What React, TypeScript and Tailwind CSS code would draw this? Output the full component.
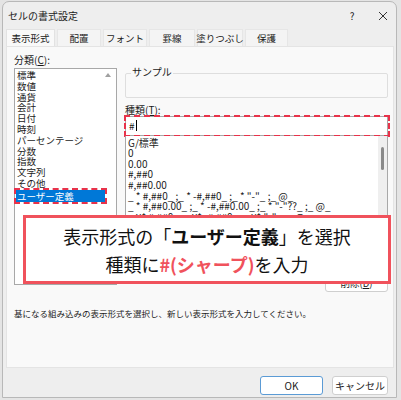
import React from "react";

const F = { fontFamily: '"Noto Sans CJK JP", "Noto Sans", sans-serif' };

export default function App() {
  const cats = ["標準", "数値", "通貨", "会計", "日付", "時刻", "パーセンテージ", "分数", "指数", "文字列", "その他"];
  const types = [
    "G/標準",
    "0",
    "0.00",
    "#,##0",
    "#,##0.00",
    '_ * #,##0_ ;_ * -#,##0_ ;_ * "-"_ ;_ @_',
    '_ * #,##0.00_ ;_ * -#,##0.00_ ;_ * "-"??_ ;_ @_',
    '_ ¥* #,##0_ ;_ ¥* -#,##0_ ;_ ¥* "-"_ ;_ @_',
    '_ ¥* #,##0.00_ ;_ ¥* -#,##0.00_ ;_ ¥* "-"??_ ;_ @_',
    "#,##0;-#,##0",
    "#,##0;[赤]-#,##0",
    "#,##0.00;-#,##0.00",
  ];
  const tabs: [string, number][] = [
    ["表示形式", 49],
    ["配置", 44],
    ["フォント", 44],
    ["罫線", 46],
    ["塗りつぶし", 46],
    ["保護", 43],
  ];
  return (
    <div className="relative w-[401px] h-[400px] overflow-hidden bg-[#e4e4e4] pl-[2px] pt-[1px] text-[#1b1b1b]" style={F}>
      <div className="w-[395px] h-[397px] bg-[#eeeeee] border border-[#b8b8b8] rounded-t-[7px] flex flex-col">
        {/* title */}
        <div className="h-[27px] flex items-center pl-[5px] text-[10px]">
          <span className="flex-1">セルの書式設定</span>
          <span className="w-[12px] text-center text-[10px] mr-[20px]">?</span>
          <svg width="10" height="10" viewBox="0 0 10 10" className="mr-[8px]">
            <path d="M1 1 L9 9 M9 1 L1 9" stroke="#333" strokeWidth="1" />
          </svg>
        </div>
        {/* tabs */}
        <div className="h-[17px] flex gap-[2px] pl-[3px] items-end">
          {tabs.map(([t, w], i) => (
            <div
              key={t}
              className={
                "h-[17px] flex items-center justify-center text-[9.5px] whitespace-nowrap border-t border-x " +
                (i === 0 ? "bg-[#f9f9f9] border-[#e2e2e2]" : "bg-[#f4f4f4] border-[#e6e6e6]")
              }
              style={{ width: w }}
            >
              {t}
            </div>
          ))}
        </div>
        {/* panel */}
        <div className="mx-[3px] w-[388px] h-[322px] bg-[#f9f9f9] border border-[#e4e4e4] flex flex-col">
          <div className="flex h-[245px]">
            {/* left */}
            <div className="pl-[7px] w-[117px] flex flex-col">
              <div className="h-[21px] pt-[7px] text-[10px] leading-[12px]">
                分類(<span className="underline">C</span>):
              </div>
              <div className="relative h-[217px] w-[103px] bg-white border border-[#a8a8a8] pt-[1px]">
                <div className="flex flex-col text-[9.5px] leading-[10.8px] pl-[1px]">
                  {cats.map((c) => (
                    <div key={c} className="pl-[1px] whitespace-nowrap">{c}</div>
                  ))}
                  <div className="relative mt-[1px] w-[89px] bg-[#0078d7] text-white pl-[1px] leading-[12px]">
                    ユーザー定義
                    <div className="absolute -left-[2px] -top-[2px] -right-[2px] -bottom-[2px] border-2 border-dashed border-[#e8324a]" />
                  </div>
                </div>
                <div className="absolute right-[5px] top-[4px] w-0 h-0 border-l-[3px] border-r-[3px] border-b-[4px] border-l-transparent border-r-transparent border-b-[#a0a0a0]" />
              </div>
            </div>
            {/* right */}
            <div className="pl-[1px] flex-1 flex flex-col pr-[5px]">
              <div className="h-[27px]" />
              <div className="relative h-[25px] border border-[#dedede] rounded-[2px]">
                <span className="absolute left-[5px] -top-[8px] bg-[#f9f9f9] text-[10px] leading-[12px] px-[1px]">サンプル</span>
              </div>
              <div className="h-[18px] pt-[6px] text-[10px] leading-[12px]">
                種類(<span className="underline">T</span>):
              </div>
              <div className="relative h-[20px] bg-white border border-[#a8a8a8] text-[10px] flex items-center pl-[3px]">
                #<span className="w-[1px] h-[11px] bg-black ml-[1px]" />
                <div className="absolute -left-[2px] -top-[2px] -right-[3px] -bottom-[2px] border-2 border-dashed border-[#e8324a]" />
              </div>
              <div className="relative h-[137px] bg-white border border-[#a8a8a8] border-t-0 overflow-hidden flex">
                <div className="flex-1 flex flex-col text-[10px] leading-[10.6px] pl-[2px] pt-[2px] whitespace-pre">
                  {types.map((t) => (
                    <div key={t}>{t}</div>
                  ))}
                </div>
                <div className="w-[9px] bg-[#efefef] flex justify-center pt-[11px]">
                  <div className="w-[3px] h-[23px] bg-[#8a8a8a] rounded-full" />
                </div>
              </div>
              <div className="flex justify-end mt-[5px]">
                <div className="w-[63px] h-[17px] bg-white border border-[#cfcfcf] rounded-[3px] text-[9.5px] flex items-center justify-center">
                  削除(<span className="underline">D</span>)
                </div>
              </div>
            </div>
          </div>
          <div className="pl-[7px] mt-[16px] text-[8.5px] leading-[10px]">
            基になる組み込みの表示形式を選択し、新しい表示形式を入力してください。
          </div>
        </div>
        {/* bottom buttons */}
        <div className="flex justify-end gap-[9px] pr-[8px] pt-[8px]">
          <div className="w-[63px] h-[19px] bg-white border border-[#5b9bd5] rounded-[3px] text-[10px] flex items-center justify-center">
            OK
          </div>
          <div className="w-[56px] h-[19px] bg-white border border-[#cfcfcf] rounded-[3px] text-[10px] flex items-center justify-center">
            キャンセル
          </div>
        </div>
      </div>
      {/* callout */}
      <div className="absolute left-[23px] top-[215px] w-[368px] h-[69px] bg-white border-[3px] border-[#f0525c] flex flex-col items-center justify-center text-[18px] leading-[28px] text-[#111]">
        <div>
          表示形式の「<span className="font-bold">ユーザー定義</span>」を選択
        </div>
        <div>
          種類に<span className="font-bold text-[#f0525c]">#(シャープ)</span>を入力
        </div>
      </div>
    </div>
  );
}
